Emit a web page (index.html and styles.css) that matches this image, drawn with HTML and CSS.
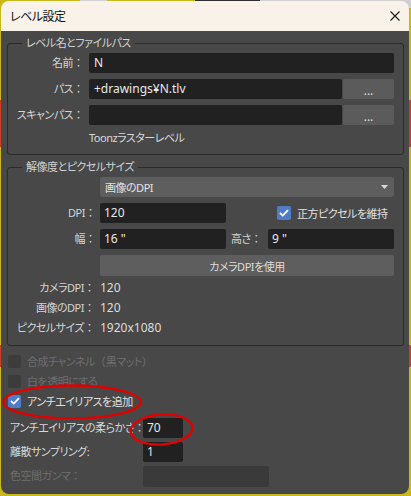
FILE: index.html
```html
<!DOCTYPE html>
<html lang="ja">

<head>
    <meta charset="UTF-8">
    <meta name="viewport" content="width=device-width, initial-scale=1.0">
    <title>レベル設定</title>
    <link rel="stylesheet" href="styles.css">
</head>

<body>
    <!-- strip of the desktop behind the dialog -->
    <div class="backdrop">
        <span class="seg seg-yellow" style="width: 80px"></span>
        <span class="seg seg-light" style="width: 27px"></span>
        <span class="seg seg-yellow" style="width: 88px"></span>
        <span class="seg seg-dark" style="width: 65px"></span>
        <span class="seg seg-light" style="width: 151px"></span>
    </div>

    <div class="window">
        <div class="titlebar">
            <span class="title jp">レベル設定</span>
            <svg class="close" width="10" height="10" viewBox="0 0 10 10">
                <path d="M0.5 0.5 L9.5 9.5 M9.5 0.5 L0.5 9.5" stroke="#1a1a1a" stroke-width="1.1" fill="none" />
            </svg>
        </div>

        <div class="dialog">
            <fieldset class="group">
                <legend class="jp">レベル名とファイルパス</legend>
                <div class="path-grid">
                    <label class="lbl jp">名前<span class="c">：</span></label>
                    <div class="field span-2">N</div>

                    <label class="lbl jp">パス<span class="c">：</span></label>
                    <div class="field">+drawings¥N.tlv</div>
                    <button class="browse">...</button>

                    <label class="lbl jp">スキャンパス<span class="c">：</span></label>
                    <div class="field"></div>
                    <button class="browse">...</button>

                    <div class="level-type jp">Toonzラスターレベル</div>
                </div>
            </fieldset>

            <fieldset class="group group-res">
                <legend class="jp">解像度とピクセルサイズ</legend>
                <div class="res-grid">
                    <div class="combo">
                        <span class="jp">画像のDPI</span>
                        <svg class="arrow" width="7" height="4" viewBox="0 0 7 4">
                            <path d="M0 0 H7 L3.5 4 Z" fill="#d8d8d8" />
                        </svg>
                    </div>

                    <label class="lbl jp">DPI<span class="c">：</span></label>
                    <div class="field">120</div>
                    <div class="check-item square">
                        <span class="box checked">
                            <svg width="10" height="8" viewBox="0 0 10 8">
                                <path d="M1 4 L3.8 6.6 L9 1.2" stroke="#fff" stroke-width="1.8" fill="none" />
                            </svg>
                        </span>
                        <span class="jp">正方ピクセルを維持</span>
                    </div>

                    <label class="lbl jp">幅<span class="c">：</span></label>
                    <div class="field">16 "</div>
                    <label class="lbl-mid jp">高さ<span class="c">：</span></label>
                    <div class="field">9 "</div>

                    <button class="wide-btn jp">カメラDPIを使用</button>
                </div>

                <div class="info-grid">
                    <span class="lbl jp">カメラDPI<span class="c">：</span></span>
                    <span class="val">120</span>
                    <span class="lbl jp">画像のDPI<span class="c">：</span></span>
                    <span class="val">120</span>
                    <span class="lbl jp">ピクセルサイズ<span class="c">：</span></span>
                    <span class="val">1920x1080</span>
                </div>
            </fieldset>

            <div class="options">
                <div class="check-item disabled">
                    <span class="box"></span>
                    <span class="jp">合成チャンネル<span class="c">（</span>黒マット<span class="c">）</span></span>
                </div>
                <div class="check-item disabled">
                    <span class="box"></span>
                    <span class="jp">白を透明にする</span>
                </div>
                <div class="check-item">
                    <span class="box checked small">
                        <svg width="10" height="8" viewBox="0 0 10 8">
                            <path d="M1 4 L3.8 6.6 L9 1.2" stroke="#fff" stroke-width="1.8" fill="none" />
                        </svg>
                    </span>
                    <span class="jp">アンチエイリアスを追加</span>
                </div>
            </div>

            <div class="aa-grid">
                <label class="lbl-left jp">アンチエイリアスの柔らかさ<span class="c">：</span></label>
                <div class="field short">70</div>

                <label class="lbl-left jp">離散サンプリング:</label>
                <div class="field short">1</div>

                <label class="lbl-left jp disabled-text">色空間ガンマ<span class="c">：</span></label>
                <div class="field off"></div>
            </div>
        </div>
    </div>

    <!-- red hand-drawn marks over the dialog -->
    <svg class="marks" width="411" height="496" viewBox="0 0 411 496">
        <ellipse cx="72" cy="402" rx="68.5" ry="16.5" stroke="#e30000" stroke-width="2.4" fill="none" />
        <ellipse cx="161.5" cy="429.5" rx="31" ry="15" stroke="#e30000" stroke-width="2.4" fill="none"
            transform="rotate(-4 161.5 429.5)" />
    </svg>
</body>

</html>
```

FILE: styles.css
```css
html, body {
    margin: 0;
    padding: 0;
}

body {
    width: 411px;
    height: 496px;
    overflow: hidden;
    position: relative;
    font-family: "Noto Sans", "Noto Sans CJK JP", sans-serif;
    font-size: 12px;
    background: linear-gradient(to bottom,
            #c9b71c 0, #c9b71c 100px,
            #c7402a 100px, #c7402a 147px,
            #c9b71c 147px, #c9b71c 345px,
            #c7402a 345px, #c7402a 367px,
            #c9b71c 367px);
}

/* japanese labels: proportional kana, a bit smaller than latin */
.jp {
    font-size: 11px;
    letter-spacing: -0.5px;
    font-feature-settings: "palt";
}

/* full-width punctuation keeps its full width */
.c {
    font-feature-settings: normal;
    letter-spacing: 0;
}

.backdrop {
    display: flex;
    height: 8px;
}

.seg {
    display: block;
    height: 8px;
}

.seg-yellow {
    background-color: #c9b71c;
}

.seg-light {
    background-color: #cfcfcf;
}

.seg-dark {
    background-color: #2e2e2e;
}

.window {
    margin: -7px 0 0 1px;
    width: 408px;
    height: 493px;
    border-radius: 8px;
    overflow: hidden;
    background-color: #484848;
    display: flex;
    flex-direction: column;
}

.titlebar {
    height: 30px;
    background-color: #f8f2e8;
    display: flex;
    align-items: center;
    justify-content: space-between;
    padding: 0 9px 0 9px;
    flex-shrink: 0;
}

.title {
    color: #111;
    font-size: 12px;
}

.close {
    display: block;
}

.dialog {
    padding: 4px 5px 0 6px;
    color: #d6d6d6;
}

/* group boxes */
.group {
    margin: 0;
    padding: 0 9px 9px 0;
    border: 1px solid #2b2b2b;
    border-radius: 3px;
    min-inline-size: 0;
}

.group legend {
    margin-left: 14px;
    padding: 0 4px;
    line-height: 16px;
    color: #d2d2d2;
}

.group-res {
    margin-top: 4px;
    padding-bottom: 7px;
}

.lbl {
    text-align: right;
    padding-right: 4px;
    line-height: 20px;
    white-space: nowrap;
    color: #d4d4d4;
}

.field {
    background-color: #212121;
    border-radius: 2px;
    padding: 0 5px;
    line-height: 20px;
    color: #e8e8e8;
    white-space: nowrap;
    overflow: hidden;
}

.span-2 {
    grid-column: span 2;
}

.path-grid {
    display: grid;
    grid-template-columns: 80px 253px 51px;
    grid-template-rows: 20px 20px 20px 14px;
    column-gap: 1px;
    row-gap: 6px;
    margin-top: 2px;
}

.browse {
    border: none;
    border-radius: 2px;
    background-color: #5b5b5b;
    color: #dcdcdc;
    font-family: inherit;
    font-size: 12px;
    padding: 4px 0 0 0;
    line-height: 14px;
}

.level-type {
    grid-column: 2;
    line-height: 14px;
    color: #d8d8d8;
}

.res-grid {
    display: grid;
    grid-template-columns: 92px 126px 42px 126px;
    grid-template-rows: 20px 20px 20px 21px;
    row-gap: 6px;
    margin-top: 2px;
}

.res-grid .field {
    padding: 0 4px;
}

.combo {
    grid-column: 2 / span 3;
    background-color: #5e5e5e;
    border-radius: 3px;
    display: flex;
    align-items: center;
    justify-content: space-between;
    padding: 0 6px 0 5px;
    color: #e2e2e2;
}

.combo .arrow {
    display: block;
}

.lbl-mid {
    padding-left: 5px;
    line-height: 20px;
    white-space: nowrap;
    color: #d4d4d4;
}

.wide-btn {
    grid-column: 2 / span 3;
    border: none;
    border-radius: 2px;
    background-color: #5e5e5e;
    color: #dcdcdc;
    font-family: inherit;
    padding: 0;
}

.info-grid {
    display: grid;
    grid-template-columns: 92px auto;
    grid-auto-rows: 20px;
    margin-top: 2px;
}

.info-grid .lbl {
    padding-right: 5px;
}

.val {
    line-height: 20px;
    color: #dcdcdc;
}

/* checkboxes */
.check-item {
    display: flex;
    align-items: center;
    gap: 6px;
    height: 20px;
    white-space: nowrap;
    color: #e0e0e0;
}

.check-item.square {
    grid-column: 4;
    padding-left: 9px;
}

.box {
    width: 13px;
    height: 13px;
    border-radius: 2px;
    background-color: #3c3c3c;
    flex-shrink: 0;
    display: flex;
    align-items: center;
    justify-content: center;
}

.box.checked {
    width: 14px;
    height: 14px;
    background-color: #4f7cc6;
}

.box.checked.small {
    width: 13px;
    height: 13px;
}

.disabled {
    color: #6e6e6e;
}

.options {
    margin-top: 5px;
    padding-left: 1px;
}

.aa-grid {
    display: grid;
    grid-template-columns: 135px 126px;
    grid-template-rows: 20px 20px 21px;
    row-gap: 4px;
    margin-top: 7px;
    padding-left: 1px;
}

.lbl-left {
    padding-left: 2px;
    line-height: 20px;
    white-space: nowrap;
    color: #d8d8d8;
}

.aa-grid .field {
    padding: 0 4px;
}

.field.short {
    width: 40px;
    box-sizing: border-box;
}

.field.off {
    background-color: #3a3a3a;
}

.disabled-text {
    color: #6e6e6e;
}

.marks {
    position: absolute;
    left: 0;
    top: 0;
    pointer-events: none;
}
```
